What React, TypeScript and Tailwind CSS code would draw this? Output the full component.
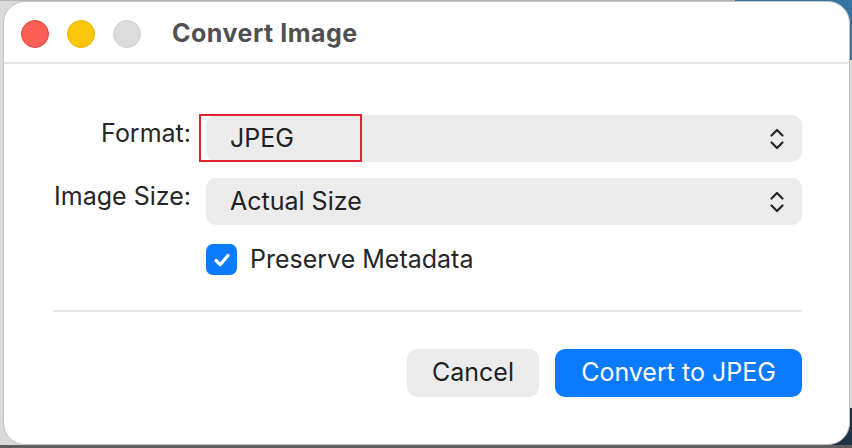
import React, { useState } from 'react';

const font = { fontFamily: 'Inter, "Noto Sans", sans-serif' };

const Chevrons: React.FC = () => (
  <svg width="18" height="26" viewBox="0 0 18 26" fill="none" stroke="#262626" strokeWidth="2.2" strokeLinecap="round" strokeLinejoin="round">
    <path d="M3.5 9.5 L9 4 L14.5 9.5" />
    <path d="M3.5 16.5 L9 22 L14.5 16.5" />
  </svg>
);

const PopupField: React.FC<{ value: string; children?: React.ReactNode }> = ({ value, children }) => (
  <div className="relative flex-1 h-[47px] rounded-[10px] bg-[#ececec] flex items-center justify-between pl-[24px] pr-[16px]">
    <span className="text-[25px] text-[#222222] leading-none">{value}</span>
    <Chevrons />
    {children}
  </div>
);

const App: React.FC = () => {
  const [preserve, setPreserve] = useState(true);

  return (
    <div className="relative w-[852px] h-[448px] overflow-hidden bg-[#dadada]" style={font}>
      {/* desktop behind the window */}
      <div className="absolute right-0 top-0 w-[120px] h-[60px] bg-[#3574a3]" />
      <div className="absolute right-0 bottom-0 w-[120px] h-[40px] bg-[#1f3346]" />
      <div className="absolute left-0 bottom-0 w-full h-[3px] bg-[#5e5e5e]" />
      <div className="absolute left-0 top-0 w-[735px] h-[1px] bg-[#b5b5b5]" />

      <div className="relative ml-[3px] mt-[1px] w-[847px] h-[444px] rounded-[22px] bg-white border border-[#c4c4c4] flex flex-col overflow-hidden">
        {/* title bar */}
        <div className="h-[62px] flex items-center pl-[17px] pt-[3px] border-b-2 border-[#e6e6e6]">
          <div className="flex items-center gap-[18px]">
            <span className="w-[28px] h-[28px] rounded-full bg-[#ff5f57] border border-[#e5443c]" />
            <span className="w-[28px] h-[28px] rounded-full bg-[#fbc609] border border-[#e9b400]" />
            <span className="w-[28px] h-[28px] rounded-full bg-[#dcdcdc] border border-[#d0d0d0]" />
          </div>
          <h1 className="ml-[31px] text-[25px] font-bold text-[#505050] tracking-[0.5px]">Convert Image</h1>
        </div>

        {/* form */}
        <div className="flex flex-col pl-[49px] pr-[47px] pt-[51px]">
          <div className="flex items-start">
            <label className="w-[138px] text-right text-[25px] text-[#262626] whitespace-nowrap">Format:</label>
            <div className="ml-[15px] flex-1 flex">
              <PopupField value="JPEG">
                <div className="absolute left-[-7px] top-[-1px] w-[163px] h-[48px] border-2 border-[#e3262e]" />
              </PopupField>
            </div>
          </div>

          <div className="flex items-start mt-[16px]">
            <label className="w-[138px] text-right text-[25px] text-[#262626] whitespace-nowrap">Image Size:</label>
            <div className="ml-[15px] flex-1 flex">
              <PopupField value="Actual Size" />
            </div>
          </div>

          <div className="flex items-center h-[31px] mt-[19px] ml-[153px]">
            <button
              onClick={() => setPreserve(!preserve)}
              className={`w-[31px] h-[31px] rounded-[7px] flex items-center justify-center ${
                preserve ? 'bg-[#0a7aff]' : 'bg-white border border-gray-400'
              }`}
            >
              {preserve && (
                <svg width="20" height="20" viewBox="0 0 20 20" fill="none" stroke="white" strokeWidth="3.2" strokeLinecap="round" strokeLinejoin="round">
                  <path d="M4 10.5 L8.2 14.6 L16 5.5" />
                </svg>
              )}
            </button>
            <span className="ml-[13px] text-[25px] leading-[31px] text-[#262626]">Preserve Metadata</span>
          </div>

          <div className="mt-[35px] h-[2px] bg-[#e6e6e6]" />

          <div className="flex justify-end gap-[16px] mt-[37px]">
            <button className="w-[132px] h-[48px] rounded-[10px] bg-[#ececec] text-[25px] text-[#1f1f1f]">Cancel</button>
            <button className="w-[247px] h-[48px] rounded-[10px] bg-[#0a7bff] text-[25px] text-white">Convert to JPEG</button>
          </div>
        </div>
      </div>
    </div>
  );
};

export default App;
